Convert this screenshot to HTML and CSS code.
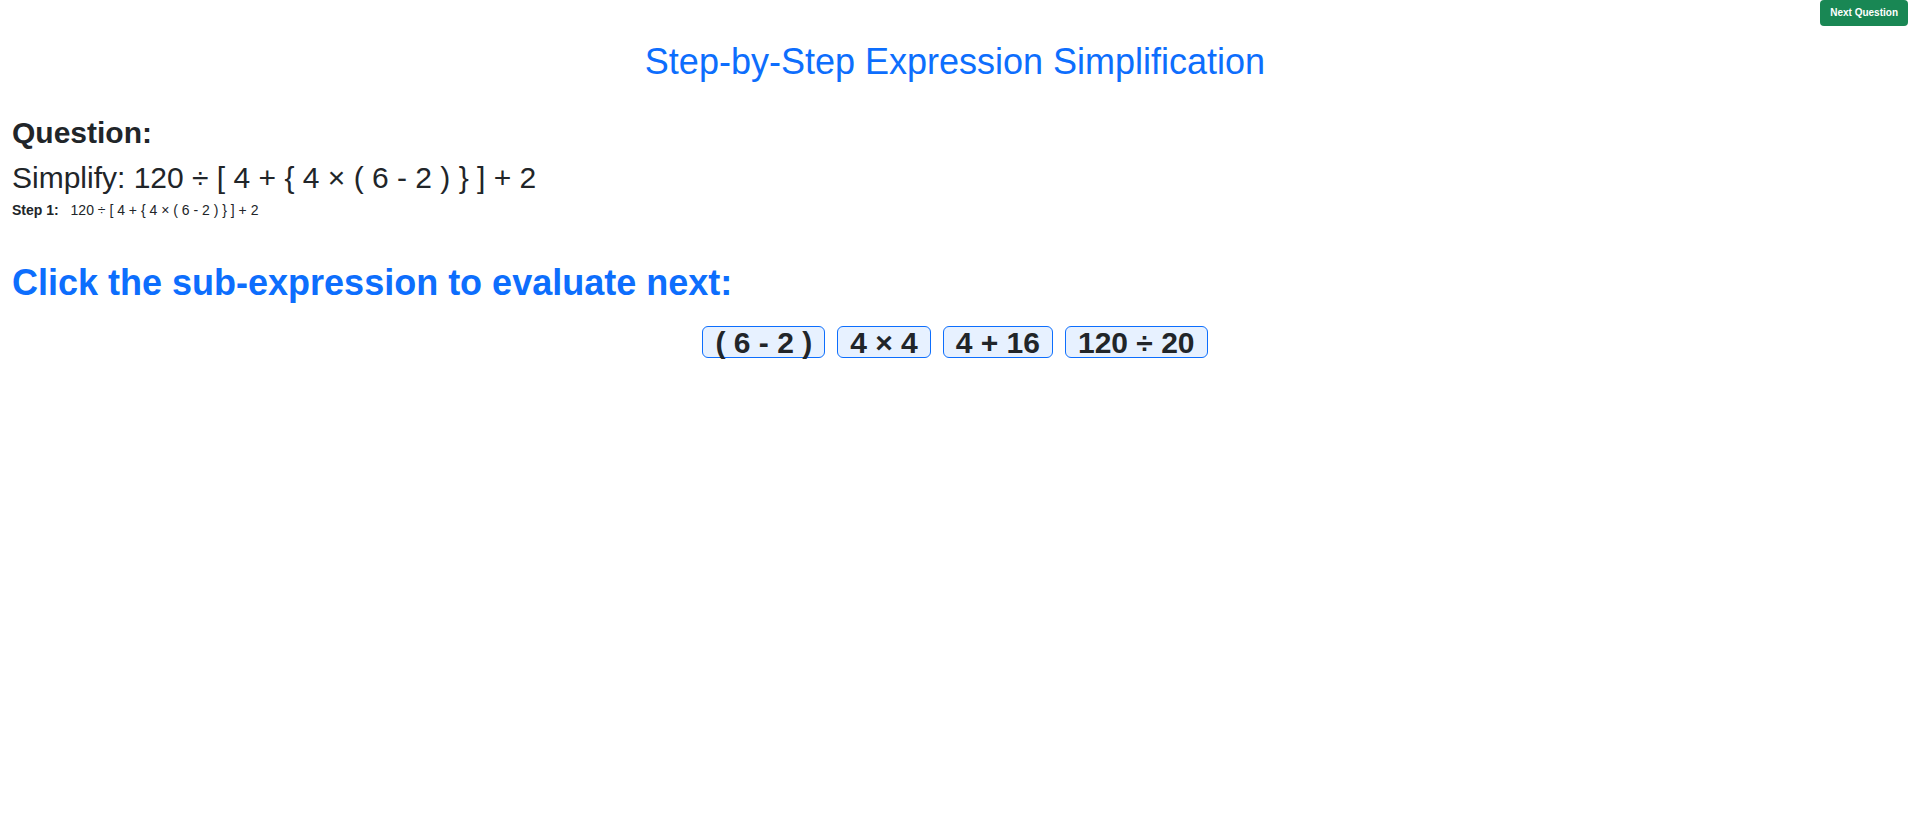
FILE: index.html
```html
<!DOCTYPE html>
<html lang="en">
<head>
    <meta charset="UTF-8">
    <meta name="viewport" content="width=device-width, initial-scale=1.0">
    <title>Step-by-Step Expression Simplification</title>
    <link rel="stylesheet" href="styles.css">
</head>
<body>
    <div class="top-bar">
        <button type="button" class="next-btn">Next Question</button>
    </div>

    <main class="container">
        <h1 class="title">Step-by-Step Expression Simplification</h1>

        <h2 class="question-label">Question:</h2>
        <p class="question">Simplify: 120 ÷ [ 4 + { 4 × ( 6 - 2 ) } ] + 2</p>

        <div class="step"><strong>Step 1:</strong> <span class="expression">120 ÷ [ 4 + { 4 × ( 6 - 2 ) } ] + 2</span></div>

        <h2 class="prompt">Click the sub-expression to evaluate next:</h2>
        <div class="options">
            <button type="button" class="option">( 6 - 2 )</button>
            <button type="button" class="option">4 × 4</button>
            <button type="button" class="option">4 + 16</button>
            <button type="button" class="option">120 ÷ 20</button>
        </div>
    </main>
</body>
</html>
```
FILE: styles.css
```css
* { margin: 0; padding: 0; box-sizing: border-box; }

body {
    padding-right: 4px;
    background: #fff;
    color: #212529;
    font-family: "Liberation Sans", Arial, sans-serif;
}

.top-bar {
    display: flex;
    justify-content: flex-end;
    padding-right: 2px;
}

.next-btn {
    padding: 5px 10px;
    background: #198754;
    border: none;
    border-radius: 4px;
    color: white;
    font: bold 10px/16px "Liberation Sans", Arial, sans-serif;
    cursor: pointer;
}

.container { padding: 14px 12px; }

.title {
    margin-bottom: 31px;
    color: #0d6efd;
    font-size: 36px;
    font-weight: normal;
    line-height: 44px;
    text-align: center;
}

.question-label {
    margin-bottom: 8px;
    font-size: 30px;
    line-height: 36px;
}

.question {
    font-size: 30px;
    line-height: 38px;
}

.step {
    font-size: 14px;
    line-height: 26px;
}

.expression { margin-left: 8px; }

.prompt {
    margin: 37px 0 20px;
    color: #0d6efd;
    font-size: 36px;
    line-height: 46px;
}

.options {
    display: flex;
    flex-wrap: wrap;
    justify-content: center;
    gap: 12px;
}

.option {
    padding: 2px 12px 0;
    background: #e7f1ff;
    border: 1px solid #0d6efd;
    border-radius: 6px;
    color: #212529;
    font: bold 30px/28px "Liberation Sans", Arial, sans-serif;
    cursor: pointer;
}
```
